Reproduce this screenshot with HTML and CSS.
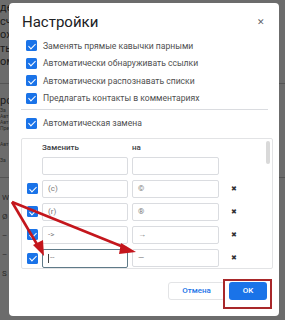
FILE: index.html
```html
<!DOCTYPE html>
<html lang="ru">
<head>
    <meta charset="UTF-8">
    <meta name="viewport" content="width=device-width, initial-scale=1.0">
    <title>Настройки</title>
    <link rel="stylesheet" href="styles.css">
</head>
<body>
    <section class="page">
        <p class="doc-line">де</p>
        <p class="doc-line">сч</p>
        <p class="doc-line">охр</p>
        <p class="doc-line">ть</p>
        <p class="doc-line">ом</p>
        <hr class="doc-rule">
        <p class="doc-line">ро</p>
        <p class="doc-small">За</p>
        <p class="doc-small">Авт</p>
        <p class="doc-small">Авт</p>
        <p class="doc-small">Пре</p>
        <p class="doc-small gap">Авт</p>
        <p class="doc-small gap">За</p>
        <hr class="doc-rule">
        <p class="doc-cell">W</p>
        <p class="doc-cell">Ø</p>
        <p class="doc-cell">–</p>
        <p class="doc-cell">–</p>
        <p class="doc-cell">S</p>
    </section>

    <div class="dialog">
        <header class="dialog-head">
            <h1>Настройки</h1>
            <span class="close">&#x2715;</span>
        </header>

        <div class="options">
            <label class="option"><span class="check"></span>Заменять прямые кавычки парными</label>
            <label class="option"><span class="check"></span>Автоматически обнаруживать ссылки</label>
            <label class="option"><span class="check"></span>Автоматически распознавать списки</label>
            <label class="option"><span class="check"></span>Предлагать контакты в комментариях</label>
        </div>

        <hr class="divider">

        <label class="option"><span class="check"></span>Автоматическая замена</label>

        <div class="table-box">
            <div class="grid">
                <span></span>
                <span class="col-title">Заменить</span>
                <span class="col-title">на</span>
                <span></span>

                <span></span>
                <span class="field"></span>
                <span class="field"></span>
                <span></span>

                <span class="check"></span>
                <span class="field">(c)</span>
                <span class="field">©</span>
                <span class="remove">✖</span>

                <span class="check"></span>
                <span class="field">(r)</span>
                <span class="field">®</span>
                <span class="remove">✖</span>

                <span class="check"></span>
                <span class="field">-&gt;</span>
                <span class="field">→</span>
                <span class="remove">✖</span>

                <span class="check"></span>
                <span class="field focus"><i class="caret"></i>--</span>
                <span class="field">—</span>
                <span class="remove">✖</span>
            </div>
            <div class="scroll-thumb"></div>
        </div>

        <footer class="dialog-foot">
            <button class="btn cancel" type="button">Отмена</button>
            <button class="btn ok" type="button">OK</button>
        </footer>
    </div>

    <div class="highlight"></div>

    <svg class="arrows" width="285" height="320" viewBox="0 0 285 320">
        <path d="M12,202 L38,246" stroke="#c4161c" stroke-width="2.6" fill="none"/>
        <path d="M33,245 L44,256 L43,240 Z" fill="#c4161c"/>
        <path d="M12,202 L126,248" stroke="#c4161c" stroke-width="2.6" fill="none"/>
        <path d="M121,243 L136,252 L119,254 Z" fill="#c4161c"/>
    </svg>
</body>
</html>
```

FILE: styles.css
```css
body {
    margin: 0;
    width: 285px;
    height: 320px;
    overflow: hidden;
    background: #6c6c6c;
    font-family: Roboto, "Noto Sans", sans-serif;
    position: relative;
}

/* dimmed document behind the dialog */
.page {
    padding-top: 1px;
    color: #1b1b1b;
}
.doc-line {
    margin: 0;
    font-size: 11px;
    line-height: 13.5px;
}
.doc-small {
    margin: 0;
    font-size: 5px;
    line-height: 6px;
    color: #2a2a2a;
}
.doc-small.gap {
    margin-top: 10px;
}
.doc-rule {
    border: none;
    border-top: 1px solid #555;
    margin: 14px 0 10px;
}
.doc-cell {
    margin: 0 0 0 2px;
    font-size: 8px;
    line-height: 19px;
    color: #2a2a2a;
}

/* dialog */
.dialog {
    position: absolute;
    left: 9px;
    top: 3px;
    width: 270px;
    height: 313px;
    box-sizing: border-box;
    background: #fff;
    border-radius: 4px;
    padding: 0 6px 0 12px;
    display: flex;
    flex-direction: column;
}
.dialog-head {
    display: flex;
    align-items: center;
    justify-content: space-between;
    height: 37px;
    padding-left: 1px;
    padding-right: 8px;
}
h1 {
    margin: 0;
    font-size: 15px;
    font-weight: 400;
    color: #202124;
}
.close {
    font-size: 9px;
    color: #5f6368;
}
.options {
    display: flex;
    flex-direction: column;
    gap: 6.5px;
}
.option {
    display: flex;
    align-items: center;
    gap: 6px;
    height: 11px;
    padding-left: 5px;
    font-size: 8.6px;
    color: #505050;
}
.check {
    width: 11px;
    height: 11px;
    border-radius: 1.5px;
    background: #1a73e8;
    position: relative;
    flex: none;
}
.check::after {
    content: "";
    position: absolute;
    left: 3.5px;
    top: 1.5px;
    width: 3px;
    height: 6px;
    border: solid #fff;
    border-width: 0 1.6px 1.6px 0;
    transform: rotate(45deg);
}
.divider {
    border: none;
    border-top: 1px solid #dadce0;
    margin: 5px 5px 8px 0;
}
.table-box {
    margin-top: 9px;
    height: 131px;
    box-sizing: border-box;
    border: 1px solid #e2e3e5;
    border-radius: 2px;
    position: relative;
    padding: 3px 0 0 5px;
}
.grid {
    display: grid;
    grid-template-columns: 11px 86px 87px 14px;
    column-gap: 4px;
    row-gap: 5px;
    align-items: center;
}
.col-title {
    font-size: 8px;
    font-weight: 500;
    color: #3c4043;
    height: 9px;
    line-height: 9px;
    margin-top: 1px;
}
.field {
    height: 18px;
    box-sizing: border-box;
    border: 1px solid #dadce0;
    border-radius: 2px;
    padding-left: 5px;
    font-size: 8px;
    line-height: 16px;
    color: #7a7a7a;
    display: flex;
    align-items: center;
}
.field.focus {
    border-color: #5f7a88;
    height: 19px;
}
.caret {
    width: 1px;
    height: 9px;
    background: #444;
    margin-right: 1px;
}
.remove {
    font-size: 7px;
    color: #333;
    text-align: right;
}
.scroll-thumb {
    position: absolute;
    right: 2px;
    top: 2px;
    width: 4px;
    height: 23px;
    border-radius: 2px;
    background: #d9d9d9;
}
.dialog-foot {
    display: flex;
    justify-content: flex-end;
    gap: 4px;
    margin-top: 13px;
    padding-right: 6px;
}
.btn {
    height: 18px;
    border-radius: 3px;
    font-family: Roboto, "Noto Sans", sans-serif;
    font-size: 8px;
    font-weight: 500;
    padding: 0;
}
.cancel {
    width: 57px;
    background: #fff;
    border: 1px solid #e3e4e6;
    color: #1a73e8;
}
.ok {
    width: 38px;
    background: #1a73e8;
    border: none;
    color: #fff;
}

/* annotations */
.highlight {
    position: absolute;
    left: 223px;
    top: 279px;
    width: 49px;
    height: 30px;
    box-sizing: border-box;
    border: 2px solid #a8282a;
}
.arrows {
    position: absolute;
    left: 0;
    top: 0;
}
```
